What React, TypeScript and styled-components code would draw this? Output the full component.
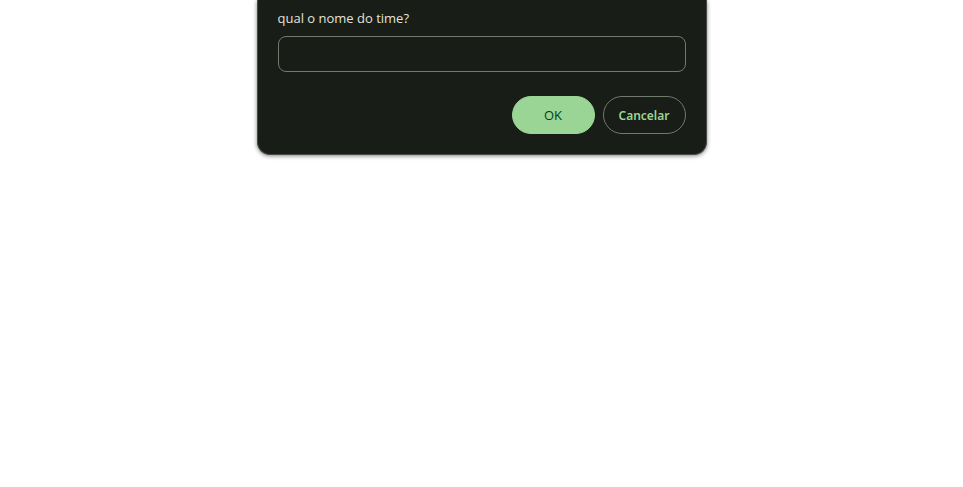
import React from "react";
import styled, { createGlobalStyle, css } from "styled-components";

const GlobalStyle = createGlobalStyle`
  *, *::before, *::after { box-sizing: border-box; }
  body { margin: 0; background: #ffffff; }
`;

const Page = styled.main`
  display: flex;
  justify-content: center;
  min-height: 100vh;
  align-items: flex-start;
  font-family: "Open Sans", "Noto Sans", sans-serif;
`;

const Dialog = styled.form`
  display: flex;
  flex-direction: column;
  width: 100%;
  max-width: 450px;
  padding: 8px 20px 20px;
  border: 1px solid #474a46;
  border-top: 0;
  border-radius: 0 0 13px 13px;
  background: #191d17;
  box-shadow: 0 1px 4px rgba(0, 0, 0, 0.5);
`;

const Message = styled.label`
  color: #e1e4da;
  font-size: 13px;
  line-height: 20px;
`;

const Field = styled.input`
  width: 100%;
  height: 36px;
  margin-top: 8px;
  padding: 0 10px;
  border: 1px solid #72796f;
  border-radius: 8px;
  background: transparent;
  color: #e1e4da;
  font: inherit;
  font-size: 13px;
  outline: none;
`;

const Actions = styled.div`
  display: flex;
  justify-content: flex-end;
  gap: 8px;
  margin-top: 24px;
`;

const Button = styled.button<{ $primary?: boolean }>`
  width: 83px;
  height: 38px;
  padding: 0;
  border: 1px solid #72796f;
  border-radius: 19px;
  background: transparent;
  color: #9bd595;
  font-family: "Noto Sans", "Open Sans", sans-serif;
  font-size: 12px;
  font-weight: 600;
  ${({ $primary }) =>
    $primary &&
    css`
      border-color: #9bd595;
      background: #9bd595;
      color: #073d10;
      font-family: inherit;
      font-size: 13px;
      font-weight: 500;
    `}
`;

export default function App() {
  return (
    <>
      <GlobalStyle />
      <Page>
        <Dialog role="dialog" onSubmit={(e: React.FormEvent) => e.preventDefault()}>
          <Message htmlFor="team">qual o nome do time?</Message>
          <Field id="team" type="text" autoComplete="off" />
          <Actions>
            <Button type="submit" $primary>OK</Button>
            <Button type="button">Cancelar</Button>
          </Actions>
        </Dialog>
      </Page>
    </>
  );
}
